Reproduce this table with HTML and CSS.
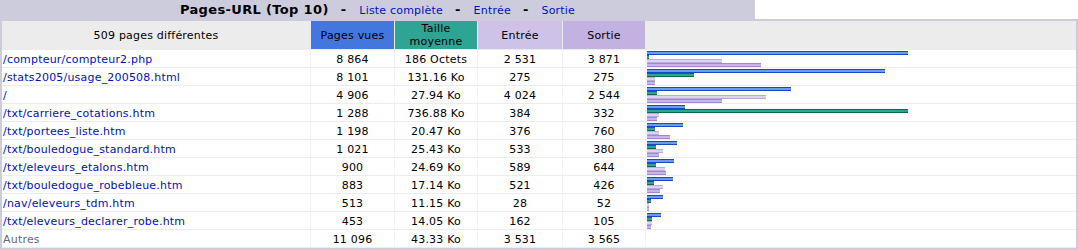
FILE: index.html
```html
<!DOCTYPE html>
<html lang="fr">
<head>
<meta charset="utf-8">
<title>Pages-URL</title>
<link rel="stylesheet" href="styles.css">
</head>
<body>
<div class="box">
  <div class="titlebar">
    <div class="title"><span class="tname">Pages-URL (Top 10)</span><span class="sep">-</span><a href="#">Liste complète</a><span class="sep">-</span><a href="#">Entrée</a><span class="sep">-</span><a href="#">Sortie</a></div>
    <div class="blank"></div>
  </div>
  <div class="frame">
    <table class="data">
      <colgroup>
        <col class="w-url"><col class="w-p"><col class="w-k"><col class="w-e"><col class="w-x"><col class="w-bar">
      </colgroup>
      <thead>
        <tr>
          <th class="h-url">509 pages différentes</th>
          <th class="h-p">Pages vues</th>
          <th class="h-k">Taille<br>moyenne</th>
          <th class="h-e">Entrée</th>
          <th class="h-x">Sortie</th>
          <th class="h-bar">&nbsp;</th>
        </tr>
      </thead>
      <tbody>
        <tr><td class="url"><a href="#">/compteur/compteur2.php</a></td><td>8 864</td><td>186 Octets</td><td>2 531</td><td>3 871</td>
          <td class="bars"><div class="bar b-p" style="width:261px"></div><div class="bar b-k" style="width:2px"></div><div class="bar b-e" style="width:75px"></div><div class="bar b-x" style="width:114px"></div></td></tr>
        <tr><td class="url"><a href="#">/stats2005/usage_200508.html</a></td><td>8 101</td><td>131.16 Ko</td><td>275</td><td>275</td>
          <td class="bars"><div class="bar b-p" style="width:238px"></div><div class="bar b-k" style="width:47px"></div><div class="bar b-e" style="width:8px"></div><div class="bar b-x" style="width:8px"></div></td></tr>
        <tr><td class="url"><a href="#">/</a></td><td>4 906</td><td>27.94 Ko</td><td>4 024</td><td>2 544</td>
          <td class="bars"><div class="bar b-p" style="width:144px"></div><div class="bar b-k" style="width:10px"></div><div class="bar b-e" style="width:119px"></div><div class="bar b-x" style="width:75px"></div></td></tr>
        <tr><td class="url"><a href="#">/txt/carriere_cotations.htm</a></td><td>1 288</td><td>736.88 Ko</td><td>384</td><td>332</td>
          <td class="bars"><div class="bar b-p" style="width:38px"></div><div class="bar b-k" style="width:261px"></div><div class="bar b-e" style="width:12px"></div><div class="bar b-x" style="width:10px"></div></td></tr>
        <tr><td class="url"><a href="#">/txt/portees_liste.htm</a></td><td>1 198</td><td>20.47 Ko</td><td>376</td><td>760</td>
          <td class="bars"><div class="bar b-p" style="width:36px"></div><div class="bar b-k" style="width:8px"></div><div class="bar b-e" style="width:12px"></div><div class="bar b-x" style="width:23px"></div></td></tr>
        <tr><td class="url"><a href="#">/txt/bouledogue_standard.htm</a></td><td>1 021</td><td>25.43 Ko</td><td>533</td><td>380</td>
          <td class="bars"><div class="bar b-p" style="width:30px"></div><div class="bar b-k" style="width:9px"></div><div class="bar b-e" style="width:16px"></div><div class="bar b-x" style="width:12px"></div></td></tr>
        <tr><td class="url"><a href="#">/txt/eleveurs_etalons.htm</a></td><td>900</td><td>24.69 Ko</td><td>589</td><td>644</td>
          <td class="bars"><div class="bar b-p" style="width:27px"></div><div class="bar b-k" style="width:9px"></div><div class="bar b-e" style="width:18px"></div><div class="bar b-x" style="width:19px"></div></td></tr>
        <tr><td class="url"><a href="#">/txt/bouledogue_robebleue.htm</a></td><td>883</td><td>17.14 Ko</td><td>521</td><td>426</td>
          <td class="bars"><div class="bar b-p" style="width:26px"></div><div class="bar b-k" style="width:7px"></div><div class="bar b-e" style="width:16px"></div><div class="bar b-x" style="width:13px"></div></td></tr>
        <tr><td class="url"><a href="#">/nav/eleveurs_tdm.htm</a></td><td>513</td><td>11.15 Ko</td><td>28</td><td>52</td>
          <td class="bars"><div class="bar b-p" style="width:16px"></div><div class="bar b-k" style="width:4px"></div><div class="bar b-e" style="width:2px"></div><div class="bar b-x" style="width:2px"></div></td></tr>
        <tr><td class="url"><a href="#">/txt/eleveurs_declarer_robe.htm</a></td><td>453</td><td>14.05 Ko</td><td>162</td><td>105</td>
          <td class="bars"><div class="bar b-p" style="width:14px"></div><div class="bar b-k" style="width:5px"></div><div class="bar b-e" style="width:5px"></div><div class="bar b-x" style="width:4px"></div></td></tr>
        <tr class="others"><td class="url"><span class="autres">Autres</span></td><td>11 096</td><td>43.33 Ko</td><td>3 531</td><td>3 565</td><td class="bars empty">&nbsp;</td></tr>
      </tbody>
    </table>
  </div>
</div>
</body>
</html>
```
FILE: styles.css
```css
html, body {
  margin: 0;
  padding: 0;
  background: #FFFFFF;
}
body {
  font-family: "DejaVu Sans", Verdana, sans-serif;
  font-size: 11px;
  letter-spacing: 0.2px;
  color: #000000;
}
a {
  color: #0011BB;
  text-decoration: none;
  font-size: 11px;
  font-weight: normal;
}
.box {
  width: 1078px;
}
.titlebar {
  display: flex;
}
.title {
  width: 755px;
  height: 19px;
  line-height: 19px;
  background: #CCCCDD;
  text-align: center;
  font-size: 13px;
  white-space: nowrap;
}
.tname {
  font-weight: bold;
  letter-spacing: 0.35px;
}
.sep {
  font-weight: bold;
  margin: 0 13px 0 12px;
}
.blank {
  flex: 1;
  background: #FFFFFF;
}
.frame {
  background: #CCCCDD;
  padding: 2px 2px 2px 2px;
}
.data {
  width: 1074px;
  table-layout: fixed;
  border-collapse: separate;
  border-spacing: 0;
  background: #FFFFFF;
}
.w-url { width: 309px; }
.w-p { width: 84px; }
.w-k { width: 83px; }
.w-e { width: 85px; }
.w-x { width: 83px; }
.w-bar { width: 430px; }
th {
  font-weight: normal;
  font-size: 11px;
  line-height: 13px;
  height: 26px;
  padding: 1px 0 1px 0;
  border-right: 1px solid #ECECEC;
  border-bottom: 1px solid #ECECEC;
  text-align: center;
  vertical-align: middle;
}
.h-url { background: #ECECEC; }
.h-p { background: #4477DD; }
.h-k { background: #2EA495; }
.h-e { background: #CEC2E8; }
.h-x { background: #C1B2E2; }
.h-bar { background: #ECECEC; border-right: 0; }
td {
  height: 15px;
  padding: 2px 0 0 0;
  border-right: 1px solid #F2F2F2;
  border-bottom: 1px solid #ECECEC;
  text-align: center;
  vertical-align: middle;
  white-space: nowrap;
  line-height: 13px;
}
td.url {
  text-align: left;
  padding-left: 1px;
}
.autres {
  color: #666688;
}
td.bars {
  padding: 1px 0 0 1px;
  height: 16px;
  border-right: 0;
  vertical-align: top;
}
.bar {
  height: 4px;
}
.b-p { background: linear-gradient(#1848C4 0 1px, #6E9BEA 1px 3px, #1848C4 3px); }
.b-k { background: linear-gradient(#0D6A4C 0 1px, #2EA495 1px 3px, #0D6A4C 3px); }
.b-e { background: linear-gradient(#BBA9E0 0 1px, #DCD3F2 1px 3px, #BBA9E0 3px); }
.b-x { background: linear-gradient(#A088D2 0 1px, #C6B6E6 1px 3px, #A088D2 3px); }
```
